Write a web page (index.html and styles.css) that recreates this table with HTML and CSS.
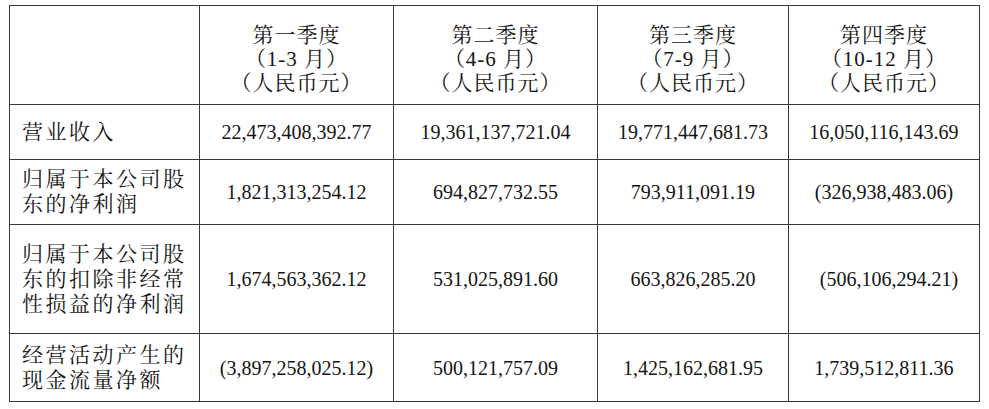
FILE: index.html
```html
<!DOCTYPE html>
<html lang="zh-CN">
<head>
<meta charset="utf-8">
<title>季度财务数据</title>
<link rel="stylesheet" href="styles.css">
</head>
<body>
<table class="report">
  <colgroup>
    <col class="c-label">
    <col class="c-q1">
    <col class="c-q2">
    <col class="c-q3">
    <col class="c-q4">
  </colgroup>
  <tr class="r-head">
    <td class="blank"></td>
    <td class="head">第一季度<br>（1-3 月）<br>（人民币元）</td>
    <td class="head">第二季度<br>（4-6 月）<br>（人民币元）</td>
    <td class="head">第三季度<br>（7-9 月）<br>（人民币元）</td>
    <td class="head">第四季度<br>（10-12 月）<br>（人民币元）</td>
  </tr>
  <tr class="r1">
    <td class="label">营业收入</td>
    <td class="num">22,473,408,392.77</td>
    <td class="num">19,361,137,721.04</td>
    <td class="num">19,771,447,681.73</td>
    <td class="num">16,050,116,143.69</td>
  </tr>
  <tr class="r2">
    <td class="label">归属于本公司股<br>东的净利润</td>
    <td class="num">1,821,313,254.12</td>
    <td class="num">694,827,732.55</td>
    <td class="num">793,911,091.19</td>
    <td class="num">(326,938,483.06)</td>
  </tr>
  <tr class="r3">
    <td class="label">归属于本公司股<br>东的扣除非经常<br>性损益的净利润</td>
    <td class="num">1,674,563,362.12</td>
    <td class="num">531,025,891.60</td>
    <td class="num">663,826,285.20</td>
    <td class="num nudge">(506,106,294.21)</td>
  </tr>
  <tr class="r4">
    <td class="label">经营活动产生的<br>现金流量净额</td>
    <td class="num">(3,897,258,025.12)</td>
    <td class="num">500,121,757.09</td>
    <td class="num">1,425,162,681.95</td>
    <td class="num">1,739,512,811.36</td>
  </tr>
</table>
</body>
</html>
```
FILE: styles.css
```css
html, body {
  margin: 0;
  padding: 0;
  background: #ffffff;
}

body {
  color: #141414;
  font-family: "Liberation Serif", "Noto Serif CJK SC", "Noto Sans CJK SC", serif;
}

.report {
  border-collapse: collapse;
  table-layout: fixed;
  width: 971px;
  margin: 5px 0 0 9px;
}

.c-label { width: 190px; }
.c-q1 { width: 194px; }
.c-q2 { width: 204px; }
.c-q3 { width: 191px; }
.c-q4 { width: 191px; }

.report td {
  border: 1px solid #383838;
  padding: 0;
  vertical-align: middle;
}

.r-head td { height: 98px; }
.r1 td { height: 54px; }
.r2 td { height: 64px; }
.r3 td { height: 108px; }
.r4 td { height: 67px; }

.report td.head {
  text-align: center;
  font-size: 21px;
  line-height: 24px;
  letter-spacing: 1px;
  padding-top: 7px;
  box-sizing: border-box;
}

.label {
  text-align: left;
  padding-left: 12px !important;
  font-size: 21px;
  line-height: 25px;
  letter-spacing: 2.5px;
  white-space: nowrap;
}

.num {
  text-align: center;
  font-size: 20px;
  line-height: 24px;
  white-space: nowrap;
}

.nudge {
  padding-left: 10px !important;
}
```
